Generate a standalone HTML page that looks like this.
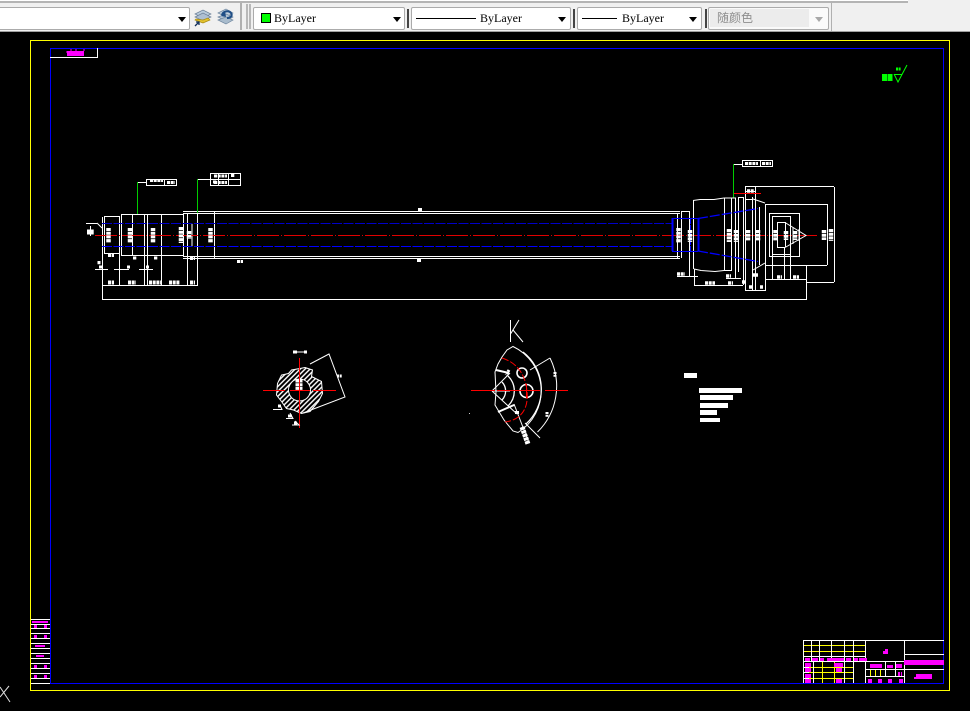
<!DOCTYPE html>
<html lang="zh">
<head>
<meta charset="utf-8">
<title>CAD drawing</title>
<style>
html,body{margin:0;padding:0;background:#000;width:970px;height:711px;overflow:hidden}
#tb{position:absolute;left:0;top:0;width:970px;height:32px;background:#f0f0f0;border-bottom:0}
#tb div{position:absolute;box-sizing:border-box}
.combo{top:7px;height:23px;background:#fff;border:1px solid #ababab;border-radius:2px}
.arrow{top:17px;width:0;height:0;border-left:4px solid transparent;border-right:4px solid transparent;border-top:5px solid #000}
.sep{top:9px;width:2px;height:19px;background:#444}
.txt{top:11px;font:12px/14px "Liberation Serif",serif;color:#000;white-space:nowrap}
.ln{top:18px;height:1px;background:#000}
#cv{position:absolute;left:0;top:32px}
#ic{position:absolute;left:0;top:0}
</style>
</head>
<body>
<div id="tb">
<div style="left:0;top:0;width:908px;height:1px;background:#fff"></div>
<div style="left:0;top:1px;width:908px;height:2px;background:#b4b4b4"></div>
<div style="left:0;top:31px;width:970px;height:1px;background:#a0a0a0"></div>
<div class="combo" style="left:-2px;width:192px"></div>
<div class="arrow" style="left:178px"></div>
<div style="left:240px;top:3px;width:2px;height:27px;background:#b0b0b0"></div>
<div style="left:246px;top:4px;width:2px;height:25px;background:#b8b8b8"></div>
<div style="left:249px;top:4px;width:2px;height:25px;background:#b8b8b8"></div>
<div class="combo" style="left:253px;width:152px"></div>
<div style="left:261px;top:13px;width:10px;height:10px;background:#00ff00;border:1px solid #000"></div>
<div class="txt" style="left:274px">ByLayer</div>
<div class="arrow" style="left:393px"></div>
<div class="sep" style="left:407px"></div>
<div class="combo" style="left:411px;width:160px"></div>
<div class="ln" style="left:416px;width:60px"></div>
<div class="txt" style="left:480px">ByLayer</div>
<div class="arrow" style="left:558px"></div>
<div class="sep" style="left:573px"></div>
<div class="combo" style="left:577px;width:125px"></div>
<div class="ln" style="left:582px;width:35px"></div>
<div class="txt" style="left:622px">ByLayer</div>
<div class="arrow" style="left:689px"></div>
<div class="sep" style="left:705px"></div>
<div class="combo" style="left:708px;width:121px;background:#fafafa"></div>
<div style="left:710px;top:9px;width:99px;height:18px;background:#ececec"></div>
<div style="left:717px;top:10px;font:12px/15px 'WenQuanYi Zen Hei','Noto Sans CJK SC',sans-serif;color:#8e8e8e">随颜色</div>
<div class="arrow" style="left:815px;border-top-color:#a8a8a8"></div>
<div style="left:831px;top:3px;width:1px;height:28px;background:#b0b0b0"></div>
</div>

<svg id="ic" width="240" height="32" viewBox="0 0 240 32">
<path d="M195 14l8-4 8 4-8 4z" fill="#b9cbdc" stroke="#6d8199" stroke-width=".7"/>
<path d="M195 17l8-4 8 4-8 4z" fill="#aebfd2" stroke="#6d8199" stroke-width=".7"/>
<path d="M195 20l8 3 7-3-2-2-5 2-7-1z" fill="#e3c22f" stroke="#a78a10" stroke-width=".7"/>
<path d="M195 26l4-4M196 22h3v3" fill="none" stroke="#12305c" stroke-width="1.300"/>
<path d="M218 13l8-4 7 4-7 4z" fill="#c4d2df" stroke="#7188a0" stroke-width=".7"/>
<path d="M218 17l8-3 7 3-7 4z" fill="#b4c5d5" stroke="#7188a0" stroke-width=".7"/>
<path d="M218 20l8-3 7 3-7 4z" fill="#a9bccd" stroke="#7188a0" stroke-width=".7"/>
<path d="M222 15c1-4 7-5 9-2s-1 5-4 5" fill="none" stroke="#1f4e86" stroke-width="2"/>
<path d="M225 11l-4 5 5 1z" fill="#1f4e86"/>
</svg>

<svg id="cv" width="970" height="679" viewBox="0 32 970 679" fill="none" stroke-linecap="butt">
<defs>
<pattern id="h" width="3.500" height="3.500" patternUnits="userSpaceOnUse" patternTransform="rotate(-45)">
<rect width="3.500" height="1.400" fill="#fff"/>
</pattern>
</defs>

<!-- frames -->
<g shape-rendering="crispEdges">
<rect x="30.500" y="40.500" width="919" height="650" stroke="#ffff00"/>
<path d="M50.500 683V48.500H943.500V683.500H50" stroke="#0000ff"/>
<path d="M50 57.500H97.500V48" stroke="#fff"/>
<rect x="67" y="51" width="17" height="5" fill="#ff00ff"/>
<path d="M66 52h2M83 50h2M70 50h2M75 50h2" stroke="#ff00ff"/>
</g>

<!-- roughness -->
<g stroke="#00ff00">
<path d="M894 74.500H902M894 74l4 8 9-17"/>
<path d="M896 69h5" stroke-width="3" stroke-dasharray="2 .6"/>
<path d="M882 77.500h11" stroke-width="7" stroke-dasharray="5 .5"/>
</g>

<!-- left shaft part -->
<g stroke="#fff" shape-rendering="crispEdges">
<path d="M102.500 217V300M104.500 216V253M119.500 216V286M121.500 214V255M132.500 214V255M144.500 214V286M147.500 214V286M161.500 214V286M183.500 213V257M187.500 213V286M197.500 213V286M214.500 212V258"/>
<path d="M104 216.500H119M104 253.500H119M121 214.500H183M121 255.500H183M102 285.500H197M102 299.500H806"/>
<path d="M183 211.500H680M183 213.500H680M183 256.500H680M183 258.500H680"/>
<path d="M95 269.500H108M114 269.500H129M139 269.500H153M86 223.500H97"/>
<path d="M190 223.500H192V246.500H190"/>
<path d="M90.500 226V236"/>
<path d="M137 182.500H146M197 179.500H210M733 164.500H742"/>
<rect x="146.500" y="179.500" width="30" height="6"/>
<path d="M164.500 179V186"/>
<rect x="210.500" y="173.500" width="30" height="12"/>
<path d="M210 179.500H241M218.500 173V186M228.500 173V186"/>
<rect x="742.500" y="160.500" width="30" height="6"/>
<path d="M760.500 160V167"/>
</g>
<path d="M97 223l5 5" stroke="#fff"/>
<g stroke="#00cc00" shape-rendering="crispEdges">
<path d="M137.500 182V214M197.500 179V213M733.500 164V198"/>
</g>

<!-- axes -->
<g shape-rendering="crispEdges">
<path d="M95 235.500H817" stroke="#e00000" stroke-dasharray="22 2 1 2"/>
<path d="M102 223.500H672" stroke="#0000c8" stroke-dasharray="10 1.500"/>
<path d="M102 246.500H672" stroke="#0000ff" stroke-dasharray="10 1.500"/>
</g>

<!-- right part -->
<g stroke="#fff" shape-rendering="crispEdges">
<path d="M677.500 213V258M681.500 211V258M689.500 211V277M693.500 200V269M694.500 269V285M724.500 198V271M731.500 198V271M735.500 198V278M738.500 197V272M743.500 197V285M745.500 187V290M752.500 197V290M755.500 187V291M759.500 207V265M765.500 204V291M772.500 254V279M784.500 247V279M790.500 254V279M799.500 213V257M827.500 204V265M834.500 187V282M806.500 265V300"/>
<path d="M681 211.500H689M738 197.500H744M745 199.500H753M745 186.500H834M765 204.500H827M765 265.500H827M769 213.500H799M769 256.500H799M772 216.500H790M772 254.500H790M777 222.500H785M777 247.500H785M769.500 213V257M772.500 216V254M777.500 222V247M785.500 222V247M790.500 216V254M745 191.500H756M765 279.500H806M806 282.500H834M677 276.500H698M694 285.500H743M745 290.500H766M726 278.500H741"/>
</g>
<g stroke="#fff">
<path d="M693 200.500L700 199.500H714L724 198H736M694 269L701 270.500 715 271.500 724 270.500H732"/>
<path d="M753 199L765 203M753 270L765 263"/>
<path d="M785 222.500L806 235.500 785 247.500"/>
<path d="M793 227V244M799 229V241"/>
</g>
<g stroke="#0000ff">
<path d="M672.500 218V251M698.500 218V251" stroke-width="2"/>
<path d="M690.500 218V251" stroke-dasharray="6 1"/>
<path d="M672 218.500H698M672 251.500H698"/>
<path d="M698 218.500L758 208.500M698 251L758 261.500" stroke-dasharray="10 2" stroke-width="1.300"/>
</g>
<path d="M734 193.500H761" stroke="#f00" shape-rendering="crispEdges"/>

<!-- dim marks -->
<g stroke="#fff">
<path d="M108.500 228V243M130 228V243M153 228V243M181 227V243M189 231V239M210.500 228V243" stroke-width="4.500" stroke-dasharray="3 .7"/>
<path d="M108 282.500H114M128 282.500H136M149 282.500H162M169 282.500H180M190 282.500H195" stroke-width="4" stroke-dasharray="3 .7"/>
<path d="M108 255.500H114M133 258H137M154 258H158M190 258.500H195M237 261.500H243M99 267H102M127 267H130M146 267H149M99 261V265" stroke-width="3" stroke-dasharray="3 .7"/>
<path d="M87 232H94" stroke-width="5" stroke-dasharray="3 .7"/>
<path d="M150 180.500H163M167 182.500H175M214 176H227M231 175.500H235M214 182.500H227M213 182H217M745 163.500H758M762 163.500H771" stroke-width="3" stroke-dasharray="3 .7"/>
<path d="M418 209.500H422M417 260.500H421" stroke-width="3"/>
<path d="M678.500 228V243M690 230V242M729 229V242M736 230V242M748 230V241M758 230V241M775.500 230V241M786 231V240M795 231V240M824 230V240M831 229V241" stroke-width="4.500" stroke-dasharray="3 .7"/>
<path d="M677 274H685M705 283H715M728 283H733M726 276H731M752 275H758M777 277H782M793 277H799M749 287H753M760 287H763M742 282H745M747 191H754" stroke-width="3.500" stroke-dasharray="3 .7"/>
</g>

<!-- section view -->
<path fill-rule="evenodd" fill="url(#h)" stroke="#fff" d="M305 367.500L312.500 370 311.500 376.500 321.500 381.500 322.500 393.500 318.500 401.500 310 411.500 301.500 413.500 293.500 410 286.500 408.500 281.500 401.500 276.500 395 277.500 383.500 281.500 375 288.500 373.500 291.500 370 300 368.500zM299.500 379a11 11 0 1 0 .01 0z"/>
<path d="M299 379.500V391" stroke="#fff" stroke-width="7" stroke-dasharray="3 .7"/>
<g stroke="#f00" shape-rendering="crispEdges">
<path d="M263 390.500H285M290 390.500H310M313 390.500H336M299.500 358V428"/>
</g>
<path d="M310 364L329 354 345 397 303 413" stroke="#fff"/>
<path d="M273 409.500H282L280 405M286 418.500H293L290 413M292 425H299L295 421" stroke="#fff"/>
<path d="M293 352h14" stroke="#fff"/>
<path d="M293 352h4M304 352h3" stroke="#fff" stroke-width="3"/>
<path d="M337 376H342" stroke="#fff" stroke-width="3" stroke-dasharray="2 .7"/>
<path d="M278 406H281M288 416H292M294 423H297" stroke="#fff" stroke-width="3"/>

<!-- K view -->
<path d="M510.500 320V342M510.500 334L519 320M513 330L523 342" stroke="#fff"/>
<g stroke="#fff">
<path d="M495 372L498 364 502 357 507 350 513 346.500A49 49 0 0 1 518 432.500L513 431 504 420 495 405 496 392z"/>
<path d="M523 352A47 47 0 0 1 526 424" stroke-width="1.200"/>
<path d="M530 370L550 358M525 423L540 438"/>
<path d="M550 358A64 64 0 0 1 537.500 432"/>
<path d="M492 391L510 373M492 391L517 414M492 391H510"/>
<path d="M496 370L509 373M498 412L514 405" stroke-width="2"/>
<path d="M502 382A13 13 0 0 1 502 400M508 376A21 21 0 0 1 508 406" stroke-width="1.300"/>
<circle cx="526.500" cy="391" r="6.500" stroke-width="1.600"/>
<circle cx="522" cy="373" r="5" stroke-width="1.600"/>
<path d="M514 404L529 443"/>
<path d="M522 427L528 444" stroke-width="5" stroke-dasharray="3 .7"/>
<path d="M517 414v-3" stroke-width="4"/>
<path d="M509 370l-3 5M555 372v5M547 412v5" stroke-width="3" stroke-dasharray="2 .7"/>
</g>
<g stroke="#f00">
<path d="M502 358C515 362 525 372 527 391S520 420 505 422" stroke-dasharray="7 2"/>
<path d="M471 390.500H495M497 390.500H540M545 390.500H568" shape-rendering="crispEdges"/>
<path d="M526.500 384V398"/>
</g>
<path d="M469 413.500h1" stroke="#ccc"/>

<!-- white list -->
<g fill="#fff" shape-rendering="crispEdges">
<rect x="684" y="373" width="13" height="5"/>
<rect x="699" y="388" width="43" height="5"/>
<rect x="700" y="395" width="33" height="5"/>
<rect x="700" y="403" width="28" height="5"/>
<rect x="700" y="410" width="17" height="5"/>
<rect x="700" y="418" width="20" height="4"/>
</g>

<!-- left strip -->
<g shape-rendering="crispEdges">
<path d="M31 619.500H50M31 624.500H50M31 628.500H50M31 633.500H50M31 638.500H50M31 643.500H50M31 648.500H50M31 653.500H50M31 658.500H50M31 663.500H50M31 668.500H50M31 673.500H50M31 678.500H50M31 683.500H50" stroke="#fff"/>
<g fill="#ff00ff">
<rect x="32" y="621" width="16" height="2"/>
<rect x="34" y="625" width="3" height="3"/><rect x="44" y="625" width="3" height="3"/>
<rect x="34" y="635" width="3" height="3"/><rect x="44" y="635" width="3" height="3"/>
<rect x="35" y="645" width="10" height="2"/>
<rect x="36" y="655" width="8" height="2"/>
<rect x="34" y="665" width="3" height="3"/><rect x="44" y="665" width="3" height="3"/>
<rect x="34" y="675" width="3" height="3"/><rect x="44" y="675" width="3" height="3"/>
</g>
</g>
<path d="M9 686L0 697M0 687L10 702" stroke="#e0e0e0"/>

<!-- title block -->
<g shape-rendering="crispEdges">
<g stroke="#ffff00">
<path d="M803 645.500H865M803 651.500H865M803 667.500H853M803 672.500H853M803 678.500H853"/>
<path d="M822.500 662V683M834.500 662V683M870.500 669V676M875.500 669V676M880.500 669V676"/>
</g>
<g stroke="#fff">
<path d="M803 640.500H944M803 656.500H865M803 661.500H904M803 667.500H809M803 672.500H809M803 678.500H809"/>
<path d="M803.500 640V683M811.500 640V661M819.500 640V661M831.500 640V661M844.500 640V683M853.500 640V683M865.500 640V683M904.500 640V683M813.500 661V683M885.500 661V676M895.500 661V676"/>
<path d="M904 654.500H944M904 669.500H944M865 669.500H904M865 676.500H904"/>
</g>
<g fill="#ff00ff">
<rect x="805" y="658" width="5" height="3"/><rect x="812" y="658" width="6" height="3"/><rect x="820" y="658" width="4" height="3"/><rect x="827" y="658" width="17" height="3"/><rect x="846" y="658" width="5" height="3"/><rect x="854" y="658" width="4" height="3"/><rect x="859" y="658" width="8" height="3"/>
<rect x="805" y="663" width="6" height="4"/><rect x="805" y="668" width="6" height="4"/><rect x="805" y="674" width="6" height="4"/><rect x="805" y="679" width="6" height="4"/>
<rect x="834" y="663" width="9" height="4"/><rect x="836" y="668" width="6" height="4"/><rect x="836" y="679" width="6" height="4"/>
<rect x="868" y="679" width="4" height="4"/><rect x="878" y="679" width="4" height="4"/><rect x="888" y="679" width="4" height="4"/><rect x="899" y="679" width="4" height="4"/>
<rect x="870" y="664" width="12" height="4"/><rect x="887" y="665" width="6" height="3"/><rect x="896" y="664" width="6" height="4"/>
<rect x="898" y="672" width="2" height="4"/><rect x="901" y="672" width="1" height="4"/>
<rect x="904" y="660" width="40" height="5"/>
<rect x="916" y="674" width="16" height="5"/><rect x="914" y="677" width="4" height="2"/><rect x="921" y="674" width="11" height="2"/>
<rect x="883" y="651" width="5" height="3"/><rect x="885" y="649" width="3" height="2"/>
</g>
</g>
</svg>
</body>
</html>
